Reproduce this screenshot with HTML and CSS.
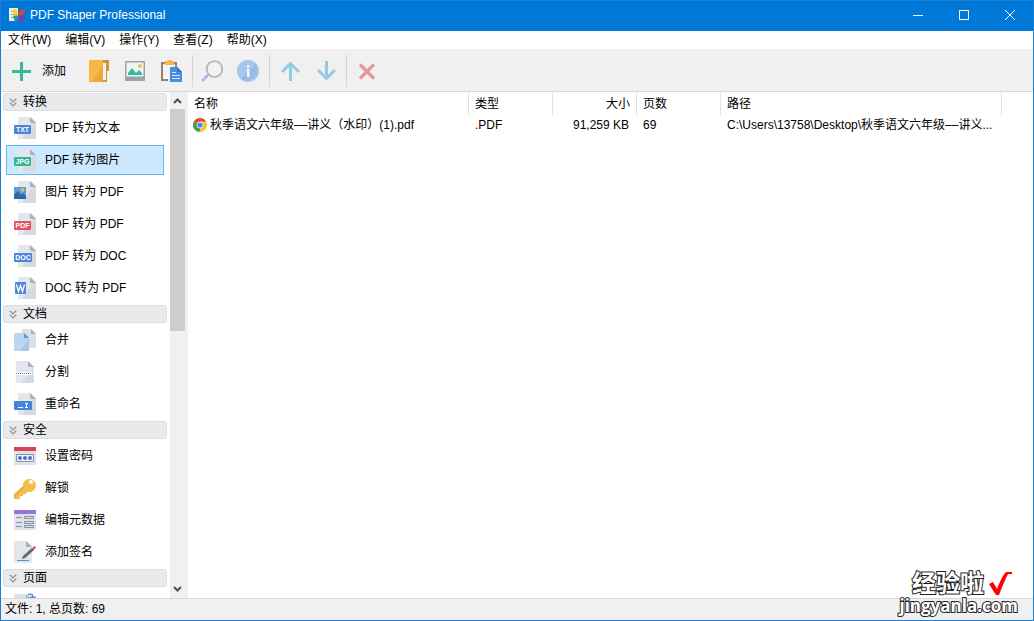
FILE: index.html
```html
<!DOCTYPE html>
<html lang="zh-CN">
<head>
<meta charset="utf-8">
<title>PDF Shaper Professional</title>
<link rel="stylesheet" href="styles.css">
</head>
<body>
<svg class="defs" aria-hidden="true">
  <symbol id="doc" viewBox="0 0 22 22"><path fill="#e3e6eb" d="M5 0h12l5 5v16l-1 1H5l-1-1V1z"/><path fill="#d5d9e0" d="M22 5v16l-1 1H8L19 5z"/><path fill="#a9b1bd" d="M16 0l6 6h-5l-1-1z"/></symbol>
  <symbol id="chev" viewBox="0 0 8 9"><path fill="none" stroke="#8c8c8c" stroke-width="1.2" d="M.7.7L4 4 7.3.7M.7 4.7L4 8l3.300-3.300"/></symbol>
</svg>
<div class="window">
  <header class="titlebar">
    <svg class="logo" viewBox="0 0 16 16"><path fill="#e4eef5" d="M0 1h9v13H0z"/><path stroke="#88a9bd" d="M2 4.500h3M2 7.500h4M2 10.500h4"/><path fill="#ffd500" d="M3 4l2-2 3 1 1 6-4-2z"/><path fill="#f04020" d="M9 8l2-5 4-1 1 2-2 4z"/><path fill="#35a853" d="M4 9l4-1v3l-3 1z"/><path fill="#168bd1" d="M5 12l4-3v5l-3 1z"/><path fill="#c0208c" d="M9 9l5 2v3l-3 1z"/></svg>
    <h1>PDF Shaper Professional</h1>
    <div class="captions">
      <button aria-label="最小化"><svg viewBox="0 0 10 10"><path d="M0 5.500h10"/></svg></button>
      <button aria-label="最大化"><svg viewBox="0 0 10 10"><path d="M.5.5h9v9h-9z"/></svg></button>
      <button aria-label="关闭"><svg viewBox="0 0 10 10"><path d="M0 0l10 10M10 0L0 10"/></svg></button>
    </div>
  </header>
  <nav class="menubar">
    <button>文件(W)</button><button>编辑(V)</button><button>操作(Y)</button><button>查看(Z)</button><button>帮助(X)</button>
  </nav>
  <div class="toolbar">
    <button class="add"><svg viewBox="0 0 22 22"><path stroke="#36bb9a" stroke-width="3" d="M11.500 2v19M2 11.500h19"/></svg><span>添加</span></button>
    <button aria-label="添加文件夹"><svg viewBox="0 0 22 22"><path fill="#cf9534" d="M14 0h7v11h-2v11h-5z"/><path fill="#f8f5ee" d="M15 3h3v17h-3z"/><path fill="#f4b944" d="M1 0h14v22H1z"/><path fill="#eaa93a" d="M15 5v17H4z"/></svg></button>
    <button aria-label="添加图片"><svg viewBox="0 0 22 22"><rect x="1" y="1" width="20" height="20" rx="1" fill="#9aa2ae"/><path fill="#f1f4f7" d="M2.500 2.500h17v14h-17z"/><path fill="#36bb9a" d="M4 15v-2l4-5 4 5 3-3 3 3v2z"/><circle cx="16" cy="6" r="2" fill="#f7bd48"/></svg></button>
    <button aria-label="粘贴"><svg viewBox="0 0 22 22"><path fill="none" stroke="#9c806e" stroke-width="2" d="M8 20H2V3h14v4"/><path fill="#f3f5f7" d="M3 5h12v3H9v11H3z"/><path fill="#f7b84a" d="M5 1h2l1-1h3l1 1h2v4H5z"/><path fill="#4b8be2" d="M10 7h7l5 5v10H10z"/><path fill="#316fc2" d="M17 7l5 5h-5z"/><path stroke="#d8e7fb" d="M12 12.500h4M12 15.500h8M12 18.500h8"/></svg></button>
    <hr>
    <button aria-label="预览"><svg viewBox="0 0 22 22"><path stroke="#a6c4ee" stroke-width="3" d="M1 21l5-5"/><path stroke="#aeb3ba" stroke-width="2" d="M5 17l3-3"/><circle cx="13.500" cy="9" r="7.800" fill="#f1f2f4" stroke="#b2b7be" stroke-width="1.800"/></svg></button>
    <button aria-label="信息"><svg viewBox="0 0 22 22"><circle cx="11" cy="11" r="11" fill="#a6c5ef"/><path fill="#9bb9e7" d="M19 4a11 11 0 0 1-15 15z"/><path fill="#f1f5fc" d="M10 5h2.500v2.500H10zM10 9h2.500v8H10z"/></svg></button>
    <hr>
    <button aria-label="上移"><svg viewBox="0 0 22 22"><path fill="none" stroke="#91cce2" stroke-width="3" d="M12.500 21V4M4 12l8.500-8.500L21 12"/></svg></button>
    <button aria-label="下移"><svg viewBox="0 0 22 22"><path fill="none" stroke="#91cce2" stroke-width="3" d="M12.500 1v17M4 10l8.500 8.500L21 10"/></svg></button>
    <hr>
    <button aria-label="删除"><svg viewBox="0 0 22 22"><path stroke="#e7969e" stroke-width="3.200" d="M5 4.500l14 14M19 4.500l-14 14"/></svg></button>
  </div>
  <main class="workspace">
    <aside class="sidebar">
      <div class="groups">
        <button class="group"><svg><use href="#chev"/></svg>转换</button>
        <button class="item"><svg viewBox="0 0 22 22"><use href="#doc"/><rect y="8" width="17" height="9" rx="1" fill="#4b86d8"/><text x="8.500" y="15">TXT</text></svg>PDF 转为文本</button>
        <button class="item selected"><svg viewBox="0 0 22 22"><use href="#doc"/><rect y="8" width="17" height="9" rx="1" fill="#36b798"/><text x="8.500" y="15">JPG</text></svg>PDF 转为图片</button>
        <button class="item"><svg viewBox="0 0 22 22"><use href="#doc"/><path fill="#5b9bdb" d="M0 6h12v12H0z"/><path fill="#2f65a8" d="M0 18v-4l4-4 3 4 2-2 3 3v3z"/><circle cx="8.500" cy="9" r="1.800" fill="#f7c14f"/></svg>图片 转为 PDF</button>
        <button class="item"><svg viewBox="0 0 22 22"><use href="#doc"/><rect y="8" width="17" height="9" rx="1" fill="#e65262"/><text x="8.500" y="15">PDF</text></svg>PDF 转为 PDF</button>
        <button class="item"><svg viewBox="0 0 22 22"><use href="#doc"/><rect y="8" width="18" height="9" rx="1" fill="#4b86d8"/><text x="9" y="15">DOC</text></svg>PDF 转为 DOC</button>
        <button class="item"><svg viewBox="0 0 22 22"><use href="#doc"/><rect x="1" y="5" width="11" height="12" rx="1" fill="#4b86d8"/><path fill="none" stroke="#fff" stroke-width="1.300" d="M2.500 7.500l2 7 2-6 2 6 2-7"/></svg>DOC 转为 PDF</button>
        <button class="group"><svg><use href="#chev"/></svg>文档</button>
        <button class="item"><svg viewBox="0 0 22 22"><path fill="#dce0e6" d="M8 0h9l5 5v14H8z"/><path fill="#a9b1bd" d="M17 0l5 5h-5z"/><path fill="#b9d7f1" d="M0 5l1-1h9l5 5v13H0z"/><path fill="#a5c7e9" d="M15 10v12H6z"/><path fill="#5c9bd5" d="M10 4l5 5h-5z"/></svg>合并</button>
        <button class="item"><svg viewBox="0 0 22 22"><path fill="#e3e6eb" d="M2 0h12l6 6v16H2z"/><path fill="#d5d9e0" d="M20 8v14H7z"/><path fill="#a9b1bd" d="M14 0l6 6h-6z"/><path fill="#fff" d="M2 11h18v3H2z"/><path stroke="#3f7fd5" stroke-dasharray="1 1" d="M2 12.500h18"/></svg>分割</button>
        <button class="item"><svg viewBox="0 0 22 22"><use href="#doc"/><rect y="8" width="18" height="9" rx="1" fill="#4684dc"/><path stroke="#fff" d="M4 14.500h5M11 10.500h3M12.500 10v5M11 14.500h3"/></svg>重命名</button>
        <button class="group"><svg><use href="#chev"/></svg>安全</button>
        <button class="item"><svg viewBox="0 0 22 22"><path fill="#dfe2e7" d="M0 2h22v18H0z"/><path fill="#d84352" d="M0 2h22v4H0z"/><path fill="#f2f4f7" stroke="#8791a3" d="M2.500 9.500h17v7h-17z"/><g fill="#3f78cc"><circle cx="6" cy="13" r="2"/><circle cx="11" cy="13" r="2"/><circle cx="16" cy="13" r="2"/></g></svg>设置密码</button>
        <button class="item"><svg viewBox="0 0 22 22"><path fill="#f6bd48" fill-rule="evenodd" d="M9 7a6.500 6.500 0 1 1 6 8h-2l-1 2H9v2H6v2l-1 1H0v-5l9-8zM17 3a2 2 0 1 0 2 2 2 2 0 0 0-2-2z"/><path fill="#e9ab3f" d="M0 18L10 9l1 1L0 21z"/></svg>解锁</button>
        <button class="item"><svg viewBox="0 0 22 22"><path fill="#dfe2e7" d="M0 1h22v20H0z"/><path fill="#9279d5" d="M0 1h22v4H0z"/><path fill="none" stroke="#8390a5" d="M2 8.500h6M2 13.500h6M2 17.500h6M10.500 7.500h9v2h-9zM10.500 12.500h9v2h-9zM10.500 16.500h9v2h-9z"/></svg>编辑元数据</button>
        <button class="item"><svg viewBox="0 0 22 22"><path fill="#e3e6eb" d="M0 0h13l5 5v17H0z"/><path fill="#a9b1bd" d="M12 0l6 6h-6z"/><path stroke="#4b90e2" d="M3 19.500h12"/><path fill="#5e6671" d="M8 18l1-3 9-8 2 2-9 8z"/><path fill="#d74a58" d="M18 7l3-2 1 1-2 3z"/></svg>添加签名</button>
        <button class="group"><svg><use href="#chev"/></svg>页面</button>
        <button class="item" aria-label="旋转页面"><svg viewBox="0 0 22 22"><path fill="#dce0e6" d="M0 1h12l5 5v16H0z"/><path fill="#a9b1bd" d="M12 1l5 5h-5z"/><path fill="none" stroke="#4b86d8" stroke-width="1.500" d="M14 1.500c4-1 5 0 5 4M16 3.500l3 3 2.500-3"/></svg></button>
      </div>
      <div class="scrollbar">
        <svg viewBox="0 0 9 6"><path d="M1 5l3.500-3.500L8 5"/></svg>
        <div class="track"><div class="thumb"></div></div>
        <svg viewBox="0 0 9 6"><path d="M1 1l3.500 3.500L8 1"/></svg>
      </div>
    </aside>
    <section class="files">
      <table>
        <colgroup><col class="wide"><col class="narrow"><col class="narrow"><col class="narrow"><col class="wide"><col></colgroup>
        <thead><tr><th>名称</th><th>类型</th><th class="num">大小</th><th>页数</th><th>路径</th><th></th></tr></thead>
        <tbody><tr>
          <td class="name"><div><svg viewBox="0 0 14 14"><circle cx="7" cy="7" r="7" fill="#f7c52f"/><path fill="#e34a3c" d="M1 3.500a7 7 0 0 1 12 0H7L4 8.500z"/><path fill="#31a354" d="M1 3.500l3 5.200 3 1.800L6.500 14A7 7 0 0 1 1 3.500z"/><circle cx="7" cy="7" r="3.300" fill="#fff"/><circle cx="7" cy="7" r="2.600" fill="#4484ef"/></svg>秋季语文六年级––讲义（水印）(1).pdf</div></td>
          <td>.PDF</td><td class="num">91,259 KB</td><td>69</td><td>C:\Users\13758\Desktop\秋季语文六年级––讲义...</td><td></td>
        </tr></tbody>
      </table>
    </section>
  </main>
  <footer class="status">文件: 1, 总页数: 69</footer>
  <div class="watermark">
    <div class="brand">经验啦<svg viewBox="0 0 24 24"><path fill="red" d="M0 12l4-2 4 7C11 9 14 3 17 0h6v2h-4C16 8 13 15 10 23H7z"/></svg></div>
    <div class="site">jingyanla.com</div>
  </div>
</div>
</body>
</html>
```
FILE: styles.css
```css
* { box-sizing: border-box; }
body { margin: 0; font: 12px/16px "Liberation Sans", "Noto Sans CJK SC", sans-serif; color: #000; }
button { margin: 0; padding: 0; border: 0; background: none; font: inherit; color: inherit; }
svg { display: block; flex: none; }
.defs { display: none; }
.window { position: relative; display: flex; flex-direction: column; height: 100vh; border: 1px solid #1b80d3; background: #fff; overflow: hidden; }

.titlebar { display: flex; align-items: center; flex: none; height: 30px; padding: 0 0 2px 8px; background: #0078d7; color: #fff; }
.titlebar h1 { margin: 0 auto 0 5px; font-size: 12px; font-weight: normal; }
.logo { width: 16px; height: 16px; }
.captions { display: flex; align-self: stretch; }
.captions button { width: 46px; display: grid; place-items: center; }
.captions svg { width: 10px; height: 10px; fill: none; stroke: #fff; }

.menubar { display: flex; flex: none; gap: 14px; height: 18px; padding-left: 7px; }
.toolbar { display: flex; align-items: center; flex: none; gap: 14px; height: 43px; padding: 2px 0 0 9px; background: #f0f0f0; border-bottom: 1px solid #d8d8d8; }
.toolbar svg { width: 22px; height: 22px; }
.toolbar .add { display: flex; align-items: center; gap: 10px; margin-right: 8px; }
.toolbar hr { width: 1px; height: 32px; margin: 0 -6px 0 -4px; border: 0; background: #d5d5d5; }

.workspace { display: flex; flex: 1; min-height: 0; }
.sidebar { display: flex; flex: none; width: 187px; }
.groups { display: flex; flex-direction: column; flex: 1; padding: 0 3px 0 2px; overflow: hidden; }
.group { display: flex; align-items: center; flex: none; gap: 6px; height: 18px; margin: 1px 0; padding-left: 5px; background: #e9eaec; border: 1px solid #dcdde0; border-radius: 3px; }
.group svg { width: 8px; height: 9px; }
.item { display: flex; align-items: center; flex: none; gap: 9px; height: 30px; margin: 1px 3px; padding-left: 7px; border: 1px solid transparent; }
.item svg { width: 22px; height: 22px; }
.item text { font: bold 7px "Liberation Sans", sans-serif; fill: #fff; text-anchor: middle; }
.selected { background: #cce8ff; border-color: #66b5f5; }
.scrollbar { display: flex; flex-direction: column; align-items: center; flex: none; width: 18px; padding: 6px 0; background: #f0f0f0; }
.scrollbar svg { width: 9px; height: 6px; margin-right: 3px; fill: none; stroke: #505050; stroke-width: 2; }
.track { flex: 1; width: 100%; padding: 5px 3px 5px 0; }
.thumb { height: 47%; background: #cdcdcd; }

.files { flex: 1; min-width: 0; overflow: hidden; }
table { width: 100%; table-layout: fixed; border-collapse: separate; border-spacing: 0; }
.wide { width: 281px; }
.narrow { width: 84px; }
th, td { padding: 0 6px; text-align: left; font-weight: normal; white-space: nowrap; }
th { height: 24px; border-right: 1px solid #e3e3e3; }
th:last-child { border-right: 0; }
td { height: 18px; }
.num { text-align: right; }
td.num { padding-right: 8px; }
.name { padding-left: 5px; }
.name div { display: flex; align-items: center; gap: 3px; }
.name svg { width: 14px; height: 14px; }

.status { flex: none; height: 22px; padding: 2px 4px; background: #f0f0f0; border-top: 1px solid #d8d8d8; }
.watermark { position: absolute; right: 15px; bottom: 5px; color: #fff; font-weight: bold; -webkit-text-stroke: 2px #222; paint-order: stroke fill; }
.brand { display: flex; align-items: center; justify-content: flex-end; gap: 5px; padding-right: 5px; font-size: 24px; line-height: 26px; }
.brand svg { width: 24px; height: 24px; }
.site { font: bold 17px/18px "Open Sans", sans-serif; }
```
